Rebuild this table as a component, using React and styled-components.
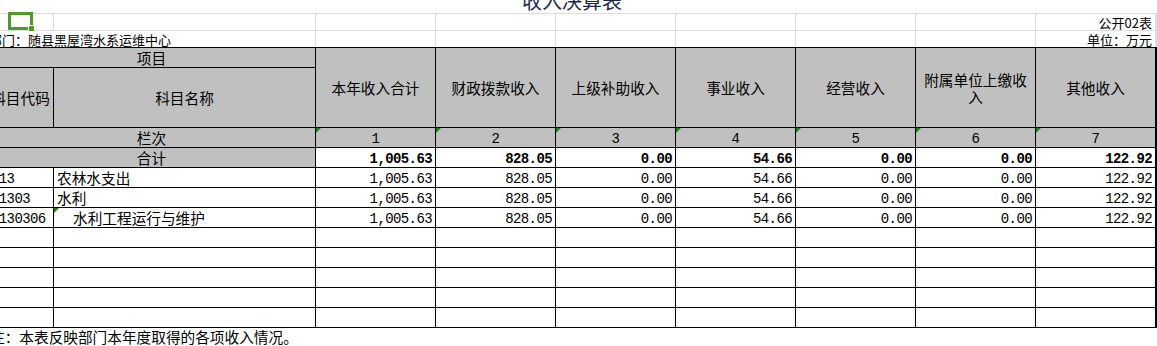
import React from 'react'
import styled, { createGlobalStyle, css } from 'styled-components'

const GlobalStyle = createGlobalStyle`
  html, body {
    margin: 0;
    padding: 0;
    background: #fff;
  }
  body {
    font-family: "Noto Sans CJK SC", "Noto Sans", sans-serif;
    color: #000;
  }
`

const COLS = '65px 261px repeat(7, 119px)'
const CJK = '"Noto Sans CJK SC", "Noto Sans", sans-serif'
const MONO = '"Liberation Mono", "DejaVu Sans Mono", monospace'

const Viewport = styled.div`
  position: relative;
  width: 1157px;
  height: 346px;
  overflow: hidden;
`

const Sheet = styled.div`
  width: 1170px;
  margin-left: -13px;
`

const TitleRow = styled.div`
  height: 13px;
  overflow: hidden;
  border-bottom: 1px solid #dcdcdc;
  display: flex;
  justify-content: center;
`

const Title = styled.span`
  font-size: 20px;
  line-height: 20px;
  margin-top: -9px;
  color: #1c2a4a;
`

const MetaGrid = styled.div`
  display: grid;
  grid-template-columns: ${COLS};
  grid-auto-rows: 16px;
  gap: 1px;
  padding: 0 1px;
  background: #dcdcdc;
`

const MetaCell = styled.div`
  background: #fff;
  display: flex;
  align-items: flex-end;
  justify-content: ${p => (p.$right ? 'flex-end' : 'flex-start')};
  padding: 0 3px 0 1px;
  font-size: 13px;
  line-height: 15px;
  white-space: nowrap;
  grid-column: ${p => p.$span || 'auto'};
`

const Table = styled.div`
  display: grid;
  grid-template-columns: ${COLS};
  grid-template-rows: 19px 59px repeat(10, 19px);
  gap: 1px;
  padding: 1px;
  background: #000;
`

const Cell = styled.div`
  position: relative;
  display: flex;
  align-items: center;
  justify-content: ${p => p.$align || 'flex-start'};
  padding: 0 3px 0 ${p => (p.$indent ? 19 : 3)}px;
  background: ${p => (p.$head ? '#c0c0c0' : '#fff')};
  font-family: ${p => (p.$mono ? MONO : CJK)};
  font-size: ${p => (p.$mono ? '14px' : '14.67px')};
  letter-spacing: ${p => (p.$mono ? '-0.6px' : '0')};
  font-weight: ${p => (p.$bold ? 700 : 400)};
  line-height: 18px;
  white-space: nowrap;
  overflow: hidden;
  grid-column: ${p => p.$col || 'auto'};
  grid-row: ${p => p.$row || 'auto'};

  ${p => p.$mono && css`
    padding-top: 2px;
  `}

  ${p => p.$marked && css`
    &::before {
      content: '';
      position: absolute;
      left: 0;
      top: 0;
      border-top: 5px solid #1e7e1e;
      border-right: 5px solid transparent;
    }
  `}
`

const HeadLabel = styled(Cell)`
  justify-content: center;
  text-align: center;
  white-space: ${p => (p.$wrap ? 'normal' : 'nowrap')};
  padding: 0 ${p => (p.$wrap ? 7 : 0)}px;
  line-height: 17px;
`

const NoteRow = styled.div`
  height: 18px;
  padding-left: 3px;
  display: flex;
  align-items: center;
  font-size: 14.67px;
  line-height: 18px;
  white-space: nowrap;
`

const Selection = styled.div`
  position: absolute;
  left: 8px;
  top: 12px;
  width: 25px;
  height: 18px;
  box-sizing: border-box;
  border: 3px solid #4e9a2a;

  &::after {
    content: '';
    position: absolute;
    right: -4px;
    bottom: -4px;
    width: 5px;
    height: 5px;
    background: #4e9a2a;
    border-left: 1px solid #fff;
    border-top: 1px solid #fff;
  }
`

const headers = ['本年收入合计', '财政拨款收入', '上级补助收入', '事业收入', '经营收入', '附属单位上缴收入', '其他收入']
const totals = ['1,005.63', '828.05', '0.00', '54.66', '0.00', '0.00', '122.92']

const rows = [
  { code: '213', name: '农林水支出', values: totals },
  { code: '21303', name: '水利', values: totals },
  { code: '2130306', name: '水利工程运行与维护', values: totals, indent: true, marked: true },
]

const emptyRows = [0, 1, 2, 3, 4]

const App = () => {
  return (
    <Viewport>
      <GlobalStyle />
      <Sheet>
        <TitleRow>
          <Title>收入决算表</Title>
        </TitleRow>

        <MetaGrid>
          {Array.from({ length: 8 }).map((_, i) => <MetaCell key={'a' + i} />)}
          <MetaCell $right>公开02表</MetaCell>
          <MetaCell $span="1 / 3">部门：随县黑屋湾水系运维中心</MetaCell>
          {Array.from({ length: 6 }).map((_, i) => <MetaCell key={'b' + i} />)}
          <MetaCell $right>单位：万元</MetaCell>
        </MetaGrid>

        <Table>
          <HeadLabel $head $col="1 / 3" $row="1">项目</HeadLabel>
          {headers.map((h, i) => (
            <HeadLabel key={h} $head $wrap $col={String(i + 3)} $row="1 / 3">{h}</HeadLabel>
          ))}
          <HeadLabel $head $col="1" $row="2">科目代码</HeadLabel>
          <HeadLabel $head $col="2" $row="2">科目名称</HeadLabel>

          <Cell $head $align="center" $col="1 / 3">栏次</Cell>
          {headers.map((h, i) => (
            <Cell key={'n' + i} $head $mono $marked $align="center">{i + 1}</Cell>
          ))}

          <Cell $head $align="center" $col="1 / 3">合计</Cell>
          {totals.map((v, i) => (
            <Cell key={'t' + i} $mono $bold $align="flex-end">{v}</Cell>
          ))}

          {rows.map(r => (
            <React.Fragment key={r.code}>
              <Cell $mono>{r.code}</Cell>
              <Cell $indent={r.indent} $marked={r.marked}>{r.name}</Cell>
              {r.values.map((v, i) => (
                <Cell key={i} $mono $align="flex-end">{v}</Cell>
              ))}
            </React.Fragment>
          ))}

          {emptyRows.map(k => (
            <React.Fragment key={'e' + k}>
              {Array.from({ length: 9 }).map((_, i) => <Cell key={i} />)}
            </React.Fragment>
          ))}
        </Table>

        <NoteRow>注：本表反映部门本年度取得的各项收入情况。</NoteRow>
      </Sheet>
      <Selection />
    </Viewport>
  )
}

export default App
